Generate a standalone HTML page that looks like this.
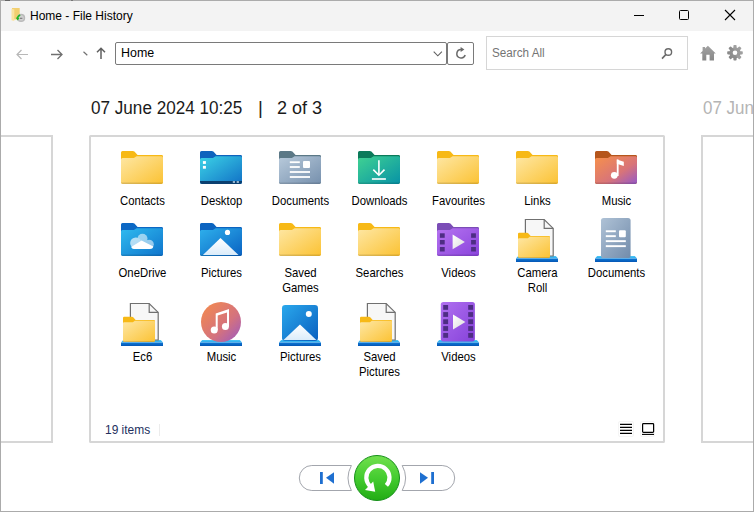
<!DOCTYPE html>
<html><head><meta charset="utf-8">
<style>
*{margin:0;padding:0;box-sizing:border-box}
html,body{width:754px;height:512px;overflow:hidden;background:#fff;font-family:"Liberation Sans",sans-serif;color:#000}
.a{position:absolute}
.t{position:absolute;white-space:nowrap;line-height:1}
.panel{position:absolute;border:2px solid #d6d6d6;background:#fff}
.lbl{position:absolute;width:79px;text-align:center;font-size:12.2px;line-height:15px;color:#000;transform:scaleX(0.93)}
svg{position:absolute;overflow:visible}
</style></head><body>
<!-- title bar -->
<div class="a" style="left:0;top:0;width:754px;height:31px;background:#f3f3f3"></div>
<svg style="left:0;top:0" width="30" height="30">
 <path d="M12 8H19.7V19.5H12Z" fill="#f2cf70"/>
 <path d="M11.5 8.7L14.3 9.6V21L11.5 20.2Z" fill="#fae3a0"/>
 <circle cx="21.1" cy="17.9" r="4.1" fill="#b9b9b9"/>
 <circle cx="21.1" cy="17.9" r="2.6" fill="#d2d2d2"/>
 <path d="M19.8 18.3H22.4" stroke="#777" stroke-width="1.1"/>
 <path d="M20.2 14.9Q17.6 15.8 17.4 18.8" stroke="#21b521" stroke-width="1.6" fill="none"/>
 <path d="M15.8 17.6L17.6 20.4L19.4 18.2Z" fill="#21b521"/>
</svg>
<div class="t" style="left:30px;top:10px;font-size:12px;color:#000">Home - File History</div>
<!-- window controls -->
<div class="a" style="left:634px;top:15px;width:10px;height:1px;background:#000"></div>
<div class="a" style="left:679px;top:10px;width:10px;height:10px;border:1px solid #000;border-radius:1.5px"></div>
<svg style="left:725px;top:10px" width="10" height="10"><path d="M0 0L10 10M10 0L0 10" stroke="#000" stroke-width="1.1"/></svg>

<!-- toolbar -->
<svg style="left:16px;top:49px" width="12" height="11"><path d="M12 5.5H1M5.5 1L1 5.5L5.5 10" stroke="#b8b8b8" stroke-width="1.2" fill="none"/></svg>
<svg style="left:51px;top:49px" width="12" height="11"><path d="M0 5.5H11M6.5 1L11 5.5L6.5 10" stroke="#707070" stroke-width="1.3" fill="none"/></svg>
<svg style="left:83px;top:51px" width="5" height="5"><path d="M0.5 0.8L4.3 4.2" stroke="#707070" stroke-width="1.2"/></svg>
<svg style="left:96px;top:47px" width="10" height="12"><path d="M5 12V1.2M1 5.2L5 1.2L9 5.2" stroke="#606060" stroke-width="1.5" fill="none"/></svg>

<div class="a" style="left:115px;top:42px;width:332px;height:23px;border:1.4px solid #7a7a7a;border-radius:2px"></div>
<div class="t" style="left:121.3px;top:47px;font-size:12px;transform:scaleX(1.035);transform-origin:0 0">Home</div>
<svg style="left:433px;top:51px" width="10" height="6"><path d="M0.7 0.7L4.8 4.8L8.9 0.7" stroke="#606060" stroke-width="1.1" fill="none"/></svg>
<div class="a" style="left:447px;top:42px;width:27px;height:23px;border:1.4px solid #7a7a7a;border-radius:2px"></div>
<svg style="left:455px;top:47px" width="12" height="13"><path d="M6.3 2.4A4.3 4.3 0 1 0 10.2 8.1" stroke="#6a6a6a" stroke-width="1.5" fill="none"/><path d="M5.6 -0.1L9.4 2.4L5.6 4.9Z" fill="#6a6a6a"/></svg>

<div class="a" style="left:486px;top:36px;width:202px;height:34px;border:1px solid #d6d6d6"></div>
<div class="t" style="left:492px;top:47px;font-size:12px;color:#747474;transform:scaleX(0.975);transform-origin:0 0">Search All</div>
<svg style="left:660px;top:47px" width="12" height="13"><circle cx="8.3" cy="5" r="3.3" stroke="#6a6a6a" stroke-width="1.4" fill="none"/><path d="M6 7.4L2 11.6" stroke="#6a6a6a" stroke-width="1.6"/></svg>

<svg style="left:700px;top:45px" width="17" height="16"><defs><linearGradient id="gH" x1="0" y1="0" x2="0" y2="1"><stop offset="0" stop-color="#a2a2a2"/><stop offset="1" stop-color="#888"/></linearGradient></defs><path d="M7.9 0.8L15.8 8.6H14V15.4H9.6V9.8H6.3V15.4H2.3V8.6H0.1L2.6 6.1V2.1H5.1V3.6Z" fill="url(#gH)"/></svg>
<svg style="left:727px;top:45px" width="16" height="16"><g transform="translate(8 7.8)" fill="url(#gH)"><circle r="5.6"/><rect x="-1.6" y="-7.8" width="3.2" height="15.6" rx="0.8" transform="rotate(0)"/><rect x="-1.6" y="-7.8" width="3.2" height="15.6" rx="0.8" transform="rotate(45)"/><rect x="-1.6" y="-7.8" width="3.2" height="15.6" rx="0.8" transform="rotate(90)"/><rect x="-1.6" y="-7.8" width="3.2" height="15.6" rx="0.8" transform="rotate(135)"/></g><circle cx="8" cy="7.8" r="2.3" fill="#fff"/></svg>

<!-- date -->
<div class="t" style="left:91px;top:99px;font-size:18.7px;color:#1a1a1a;transform:scaleX(0.916);transform-origin:0 0">07 June 2024 10:25</div>
<div class="t" style="left:258px;top:99px;font-size:18.7px;color:#1a1a1a">|</div>
<div class="t" style="left:277px;top:99px;font-size:18.7px;color:#1a1a1a;transform:scaleX(0.965);transform-origin:0 0">2 of 3</div>
<div class="t" style="left:703px;top:99px;font-size:18.7px;color:#b4b4b4;transform:scaleX(0.907);transform-origin:0 0">07 June</div>

<!-- panels -->
<div class="panel" style="left:-100px;top:135px;width:153px;height:308px"></div>
<div class="panel" style="border-radius:1.5px;left:89px;top:135px;width:576px;height:308px"></div>
<div class="panel" style="left:701px;top:135px;width:200px;height:308px"></div>

<!-- status -->
<div class="t" style="left:105px;top:424px;font-size:12.2px;color:#23305e;transform:scaleX(0.98);transform-origin:0 0">19 items</div>
<div class="a" style="left:159px;top:424px;width:1px;height:12px;background:#ececec"></div>
<div class="a" style="left:618px;top:421px;width:16px;height:16px;border:1px solid #f5f5f5;border-radius:2px"></div><div class="a" style="left:640px;top:421px;width:15px;height:16px;border:1px solid #f5f5f5;border-radius:2px"></div>
<svg style="left:620px;top:423px" width="13" height="12"><path d="M0 1.4H12M0 4.4H12M0 7.4H12M0 10.4H12" stroke="#000" stroke-width="1.1"/></svg>
<svg style="left:642px;top:423px" width="13" height="13"><rect x="0.6" y="0.6" width="11" height="8.8" rx="0.8" stroke="#000" stroke-width="1.2" fill="none"/><path d="M0 11.4H12" stroke="#000" stroke-width="1.1"/></svg>

<!-- bottom nav -->
<svg style="left:298px;top:454px" width="160" height="48">
 <path d="M13.8 11.5H53.4A26 26 0 0 0 53.4 36.5H13.8A12.5 12.5 0 0 1 13.8 11.5Z" fill="#fff" stroke="#a3a6ad" stroke-width="1"/>
 <path d="M104.2 11.5H144.2A12.5 12.5 0 0 1 144.2 36.5H104.2A26 26 0 0 0 104.2 11.5Z" fill="#fff" stroke="#a3a6ad" stroke-width="1"/>
 <rect x="22" y="18" width="2.8" height="12" fill="#1e6fd0"/>
 <path d="M28 23.8L36 18.2V29.8Z" fill="#1e6fd0"/>
 <path d="M122 18.2L130 23.8L122 29.8Z" fill="#1e6fd0"/>
 <rect x="133.2" y="18" width="2.8" height="12" fill="#1e6fd0"/>
</svg>
<svg style="left:354px;top:455px" width="46" height="46">
 <defs><linearGradient id="gG" x1="0" y1="0" x2="0" y2="1"><stop offset="0" stop-color="#72e04e"/><stop offset="0.5" stop-color="#44cc30"/><stop offset="1" stop-color="#22ac14"/></linearGradient></defs>
 <circle cx="23" cy="23" r="22.5" fill="url(#gG)" stroke="#16901a" stroke-width="1"/>
 <path d="M32.4 30.4A11.6 11.6 0 1 0 16.2 31.2" stroke="#fff" stroke-width="4.2" fill="none"/>
 <path d="M11 35L21.2 36.8L19.2 26.5Z" fill="#fff"/>
</svg>

<svg style="left:0;top:0" width="754" height="512"><defs>
<linearGradient id="gY" x1="0" y1="0" x2="1" y2="1"><stop offset="0" stop-color="#fee7a4"/><stop offset="1" stop-color="#fbc233"/></linearGradient>
<linearGradient id="gD" x1="0" y1="0" x2="1" y2="1"><stop offset="0" stop-color="#3cd3e6"/><stop offset="1" stop-color="#1171c6"/></linearGradient>
<linearGradient id="gDoc" x1="0" y1="0" x2="1" y2="1"><stop offset="0" stop-color="#b8cadb"/><stop offset="1" stop-color="#7690ad"/></linearGradient>
<linearGradient id="gDL" x1="0" y1="0" x2="1" y2="1"><stop offset="0" stop-color="#40d292"/><stop offset="1" stop-color="#0792a6"/></linearGradient>
<linearGradient id="gMu" x1="0" y1="0" x2="1" y2="1"><stop offset="0" stop-color="#f7914a"/><stop offset="0.6" stop-color="#d87479"/><stop offset="1" stop-color="#9458c8"/></linearGradient>
<linearGradient id="gOD" x1="0" y1="0" x2="1" y2="1"><stop offset="0" stop-color="#2fbbef"/><stop offset="1" stop-color="#0f74cc"/></linearGradient>
<linearGradient id="gPic" x1="0" y1="0" x2="1" y2="1"><stop offset="0" stop-color="#2eb0ec"/><stop offset="1" stop-color="#0a62c2"/></linearGradient>
<linearGradient id="gMt" x1="0" y1="0" x2="0" y2="1"><stop offset="0" stop-color="#ffffff"/><stop offset="1" stop-color="#dbecfa"/></linearGradient>
<linearGradient id="gVid" x1="0" y1="0" x2="1" y2="1"><stop offset="0" stop-color="#b573f0"/><stop offset="1" stop-color="#8a44dc"/></linearGradient>
<linearGradient id="gPlay" x1="0" y1="0" x2="1" y2="1"><stop offset="0" stop-color="#ffffff"/><stop offset="1" stop-color="#dcdcdc"/></linearGradient>
<linearGradient id="gBT" x1="0" y1="0" x2="0" y2="1"><stop offset="0" stop-color="#4cc8f6"/><stop offset="1" stop-color="#2aa6ec"/></linearGradient>
<linearGradient id="gBB" x1="0" y1="0" x2="0" y2="1"><stop offset="0" stop-color="#0c78d6"/><stop offset="1" stop-color="#0656b4"/></linearGradient>
<linearGradient id="gDocL" x1="0" y1="0" x2="1" y2="1"><stop offset="0" stop-color="#afc2d6"/><stop offset="1" stop-color="#728cab"/></linearGradient>
<linearGradient id="gMuL" x1="0" y1="0" x2="1" y2="1"><stop offset="0" stop-color="#f68c4a"/><stop offset="0.6" stop-color="#d4727e"/><stop offset="1" stop-color="#9a58c4"/></linearGradient>
<linearGradient id="gPicL" x1="0" y1="0" x2="1" y2="1"><stop offset="0" stop-color="#2aa8ec"/><stop offset="1" stop-color="#0a5fbf"/></linearGradient>
<linearGradient id="gVidL" x1="0" y1="0" x2="1" y2="1"><stop offset="0" stop-color="#b070f0"/><stop offset="1" stop-color="#8642da"/></linearGradient>
</defs>
<g transform="translate(121 151) scale(1.0)"><path d="M0 1.5Q0 0 1.5 0H11.8Q12.7 0 13.4 0.6L16.6 4.1H40.5Q42 4 42 5.5V30.8Q42 33 39.8 33H2.2Q0 33 0 30.8Z" fill="#f7b916"/><path d="M0 8.5Q0 7 1.5 7H12.9L15.6 5.2H40.5Q42 5.2 42 6.7V30.8Q42 33 39.8 33H2.2Q0 33 0 30.8Z" fill="url(#gY)"/><path d="M0 31.6H42V30.8Q42 33 39.8 33H2.2Q0 33 0 30.8Z" fill="#000" opacity="0.13"/></g>
<g transform="translate(200 151) scale(1.0)"><path d="M0 1.5Q0 0 1.5 0H11.8Q12.7 0 13.4 0.6L16.6 4.1H40.5Q42 4 42 5.5V30.8Q42 33 39.8 33H2.2Q0 33 0 30.8Z" fill="#0f63bd"/><path d="M0 8.5Q0 7 1.5 7H12.9L15.6 5.2H40.5Q42 5.2 42 6.7V30.8Q42 33 39.8 33H2.2Q0 33 0 30.8Z" fill="url(#gD)"/><rect x="2.9" y="10.1" width="3" height="2.8" fill="#fff"/><rect x="2.9" y="14.9" width="3" height="2.8" fill="#fff"/><path d="M0 30H42V30.8Q42 33 39.8 33H2.2Q0 33 0 30.8Z" fill="#0b3f6f"/><rect x="32.8" y="30.3" width="2.2" height="1.4" fill="#cfe6f5"/><rect x="36.7" y="30.3" width="2.2" height="1.4" fill="#cfe6f5"/></g>
<g transform="translate(279 151) scale(1.0)"><path d="M0 1.5Q0 0 1.5 0H11.8Q12.7 0 13.4 0.6L16.6 4.1H40.5Q42 4 42 5.5V30.8Q42 33 39.8 33H2.2Q0 33 0 30.8Z" fill="#5b7886"/><path d="M0 8.5Q0 7 1.5 7H12.9L15.6 5.2H40.5Q42 5.2 42 6.7V30.8Q42 33 39.8 33H2.2Q0 33 0 30.8Z" fill="url(#gDoc)"/><path d="M0 31.6H42V30.8Q42 33 39.8 33H2.2Q0 33 0 30.8Z" fill="#000" opacity="0.13"/><g fill="#fff"><rect x="10.8" y="10.3" width="10" height="1.8"/><rect x="10.8" y="15.1" width="10" height="1.8"/><rect x="10.8" y="20.1" width="20.2" height="1.8"/><rect x="10.8" y="25.1" width="20.2" height="1.8"/><rect x="24" y="10" width="7" height="7" rx="1"/></g></g>
<g transform="translate(358 151) scale(1.0)"><path d="M0 1.5Q0 0 1.5 0H11.8Q12.7 0 13.4 0.6L16.6 4.1H40.5Q42 4 42 5.5V30.8Q42 33 39.8 33H2.2Q0 33 0 30.8Z" fill="#0b7a5a"/><path d="M0 8.5Q0 7 1.5 7H12.9L15.6 5.2H40.5Q42 5.2 42 6.7V30.8Q42 33 39.8 33H2.2Q0 33 0 30.8Z" fill="url(#gDL)"/><path d="M0 31.6H42V30.8Q42 33 39.8 33H2.2Q0 33 0 30.8Z" fill="#000" opacity="0.13"/><g stroke="#fff" stroke-width="1.6" fill="none"><path d="M20.9 9.3V24"/><path d="M15.3 18.6L20.9 24.2L26.5 18.6"/><path d="M13.9 28H27.9"/></g></g>
<g transform="translate(437 151) scale(1.0)"><path d="M0 1.5Q0 0 1.5 0H11.8Q12.7 0 13.4 0.6L16.6 4.1H40.5Q42 4 42 5.5V30.8Q42 33 39.8 33H2.2Q0 33 0 30.8Z" fill="#f7b916"/><path d="M0 8.5Q0 7 1.5 7H12.9L15.6 5.2H40.5Q42 5.2 42 6.7V30.8Q42 33 39.8 33H2.2Q0 33 0 30.8Z" fill="url(#gY)"/><path d="M0 31.6H42V30.8Q42 33 39.8 33H2.2Q0 33 0 30.8Z" fill="#000" opacity="0.13"/></g>
<g transform="translate(516 151) scale(1.0)"><path d="M0 1.5Q0 0 1.5 0H11.8Q12.7 0 13.4 0.6L16.6 4.1H40.5Q42 4 42 5.5V30.8Q42 33 39.8 33H2.2Q0 33 0 30.8Z" fill="#f7b916"/><path d="M0 8.5Q0 7 1.5 7H12.9L15.6 5.2H40.5Q42 5.2 42 6.7V30.8Q42 33 39.8 33H2.2Q0 33 0 30.8Z" fill="url(#gY)"/><path d="M0 31.6H42V30.8Q42 33 39.8 33H2.2Q0 33 0 30.8Z" fill="#000" opacity="0.13"/></g>
<g transform="translate(595 151) scale(1.0)"><path d="M0 1.5Q0 0 1.5 0H11.8Q12.7 0 13.4 0.6L16.6 4.1H40.5Q42 4 42 5.5V30.8Q42 33 39.8 33H2.2Q0 33 0 30.8Z" fill="#b5561c"/><path d="M0 8.5Q0 7 1.5 7H12.9L15.6 5.2H40.5Q42 5.2 42 6.7V30.8Q42 33 39.8 33H2.2Q0 33 0 30.8Z" fill="url(#gMu)"/><path d="M0 31.6H42V30.8Q42 33 39.8 33H2.2Q0 33 0 30.8Z" fill="#000" opacity="0.13"/><g fill="#fff"><rect x="21.8" y="8.5" width="1.8" height="16.5"/><path d="M21.8 8.5L28.8 10.8V15L21.8 12.8Z"/><circle cx="19.3" cy="24.3" r="3.4"/></g></g>
<g transform="translate(121 223) scale(1.0)"><path d="M0 1.5Q0 0 1.5 0H11.8Q12.7 0 13.4 0.6L16.6 4.1H40.5Q42 4 42 5.5V30.8Q42 33 39.8 33H2.2Q0 33 0 30.8Z" fill="#0c68c4"/><path d="M0 8.5Q0 7 1.5 7H12.9L15.6 5.2H40.5Q42 5.2 42 6.7V30.8Q42 33 39.8 33H2.2Q0 33 0 30.8Z" fill="url(#gOD)"/><path d="M0 31.6H42V30.8Q42 33 39.8 33H2.2Q0 33 0 30.8Z" fill="#000" opacity="0.13"/><g opacity="0.55" fill="#fff"><circle cx="14.9" cy="20.1" r="5.7"/><circle cx="21.5" cy="15.8" r="5"/><circle cx="28.2" cy="21.3" r="4.6"/><rect x="12" y="19" width="17" height="6.9" rx="2"/></g><circle cx="14.9" cy="20.1" r="5.7" fill="#fff" opacity="0.25"/><path d="M10.2 23.9L20.6 17.6L32.3 23.4Q32 25.9 28.5 25.9H13Q10.6 25.9 10.2 23.9Z" fill="#fff"/></g>
<g transform="translate(200 223) scale(1.0)"><path d="M0 1.5Q0 0 1.5 0H11.8Q12.7 0 13.4 0.6L16.6 4.1H40.5Q42 4 42 5.5V30.8Q42 33 39.8 33H2.2Q0 33 0 30.8Z" fill="#0c64c0"/><path d="M0 8.5Q0 7 1.5 7H12.9L15.6 5.2H40.5Q42 5.2 42 6.7V30.8Q42 33 39.8 33H2.2Q0 33 0 30.8Z" fill="url(#gPic)"/><path d="M0 31.6H42V30.8Q42 33 39.8 33H2.2Q0 33 0 30.8Z" fill="#000" opacity="0.13"/><circle cx="27.5" cy="9.4" r="2.6" fill="#fff"/><path d="M2.9 32L20.5 15L38.5 32Z" fill="url(#gMt)"/></g>
<g transform="translate(279 223) scale(1.0)"><path d="M0 1.5Q0 0 1.5 0H11.8Q12.7 0 13.4 0.6L16.6 4.1H40.5Q42 4 42 5.5V30.8Q42 33 39.8 33H2.2Q0 33 0 30.8Z" fill="#f7b916"/><path d="M0 8.5Q0 7 1.5 7H12.9L15.6 5.2H40.5Q42 5.2 42 6.7V30.8Q42 33 39.8 33H2.2Q0 33 0 30.8Z" fill="url(#gY)"/><path d="M0 31.6H42V30.8Q42 33 39.8 33H2.2Q0 33 0 30.8Z" fill="#000" opacity="0.13"/></g>
<g transform="translate(358 223) scale(1.0)"><path d="M0 1.5Q0 0 1.5 0H11.8Q12.7 0 13.4 0.6L16.6 4.1H40.5Q42 4 42 5.5V30.8Q42 33 39.8 33H2.2Q0 33 0 30.8Z" fill="#f7b916"/><path d="M0 8.5Q0 7 1.5 7H12.9L15.6 5.2H40.5Q42 5.2 42 6.7V30.8Q42 33 39.8 33H2.2Q0 33 0 30.8Z" fill="url(#gY)"/><path d="M0 31.6H42V30.8Q42 33 39.8 33H2.2Q0 33 0 30.8Z" fill="#000" opacity="0.13"/></g>
<g transform="translate(437 223) scale(1.0)"><path d="M0 1.5Q0 0 1.5 0H11.8Q12.7 0 13.4 0.6L16.6 4.1H40.5Q42 4 42 5.5V30.8Q42 33 39.8 33H2.2Q0 33 0 30.8Z" fill="#7b4db6"/><path d="M0 8.5Q0 7 1.5 7H12.9L15.6 5.2H40.5Q42 5.2 42 6.7V30.8Q42 33 39.8 33H2.2Q0 33 0 30.8Z" fill="url(#gVid)"/><path d="M0 31.6H42V30.8Q42 33 39.8 33H2.2Q0 33 0 30.8Z" fill="#000" opacity="0.13"/><rect x="2.9" y="10.3" width="4.8" height="4.5" fill="#4e2d84"/><rect x="2.9" y="17" width="4.8" height="4.5" fill="#4e2d84"/><rect x="2.9" y="24" width="4.8" height="4.5" fill="#4e2d84"/><rect x="34.1" y="10.3" width="4.8" height="4.5" fill="#4e2d84"/><rect x="34.1" y="17" width="4.8" height="4.5" fill="#4e2d84"/><rect x="34.1" y="24" width="4.8" height="4.5" fill="#4e2d84"/><path d="M15.6 11.6L27.9 19L15.6 26.3Z" fill="url(#gPlay)"/></g>
<path d="M2.2 255.8H516" fill="none"/><g transform="translate(516 256)"><path d="M2.2 0H39.8L42 2.6H0Z" fill="url(#gBT)"/><rect x="0" y="2.6" width="42" height="3.4" fill="url(#gBB)"/></g><g transform="translate(516 256)"><path d="M9.4 -36.5H28.2L37.2 -27.6V0H9.4Z" fill="#f7f7f7" stroke="#707070" stroke-width="1.2"/><path d="M28.2 -36.5V-27.6H37.2" fill="none" stroke="#707070" stroke-width="1.2"/></g><g transform="translate(518 232.8) scale(0.7619047619047619)"><path d="M0 1.5Q0 0 1.5 0H11.8Q12.7 0 13.4 0.6L16.6 4.1H40.5Q42 4 42 5.5V30.8Q42 33 39.8 33H2.2Q0 33 0 30.8Z" fill="#f7b916"/><path d="M0 8.5Q0 7 1.5 7H12.9L15.6 5.2H40.5Q42 5.2 42 6.7V30.8Q42 33 39.8 33H2.2Q0 33 0 30.8Z" fill="url(#gY)"/><path d="M0 31.6H42V30.8Q42 33 39.8 33H2.2Q0 33 0 30.8Z" fill="#000" opacity="0.13"/></g>
<path d="M2.2 255.8H595" fill="none"/><g transform="translate(595 256)"><path d="M2.2 0H39.8L42 2.6H0Z" fill="url(#gBT)"/><rect x="0" y="2.6" width="42" height="3.4" fill="url(#gBB)"/></g><g transform="translate(595 256)"><rect x="6" y="-38" width="29.6" height="40" rx="2.6" fill="url(#gDocL)"/><g fill="#fff"><rect x="10.8" y="-25.7" width="10" height="1.9"/><rect x="10.8" y="-20.8" width="10" height="1.9"/><rect x="10.8" y="-15.8" width="20" height="1.9"/><rect x="10.8" y="-10.8" width="20" height="1.9"/><rect x="24" y="-25.8" width="6.8" height="7" rx="1"/></g></g>
<path d="M2.2 339.8H121" fill="none"/><g transform="translate(121 340)"><path d="M2.2 0H39.8L42 2.6H0Z" fill="url(#gBT)"/><rect x="0" y="2.6" width="42" height="3.4" fill="url(#gBB)"/></g><g transform="translate(121 340)"><path d="M9.4 -36.5H28.2L37.2 -27.6V0H9.4Z" fill="#f7f7f7" stroke="#707070" stroke-width="1.2"/><path d="M28.2 -36.5V-27.6H37.2" fill="none" stroke="#707070" stroke-width="1.2"/></g><g transform="translate(123 316.8) scale(0.7619047619047619)"><path d="M0 1.5Q0 0 1.5 0H11.8Q12.7 0 13.4 0.6L16.6 4.1H40.5Q42 4 42 5.5V30.8Q42 33 39.8 33H2.2Q0 33 0 30.8Z" fill="#f7b916"/><path d="M0 8.5Q0 7 1.5 7H12.9L15.6 5.2H40.5Q42 5.2 42 6.7V30.8Q42 33 39.8 33H2.2Q0 33 0 30.8Z" fill="url(#gY)"/><path d="M0 31.6H42V30.8Q42 33 39.8 33H2.2Q0 33 0 30.8Z" fill="#000" opacity="0.13"/></g>
<path d="M2.2 339.8H200" fill="none"/><g transform="translate(200 340)"><path d="M2.2 0H39.8L42 2.6H0Z" fill="url(#gBT)"/><rect x="0" y="2.6" width="42" height="3.4" fill="url(#gBB)"/></g><g transform="translate(200 340)"><circle cx="21" cy="-18" r="20" fill="url(#gMuL)"/><g fill="#fff"><path d="M15.7 -26.6L29 -31V-13.4H27V-27.6L17.7 -24.5V-9.7H15.7Z"/><circle cx="14.2" cy="-9.9" r="3.5"/><circle cx="25.4" cy="-13.5" r="3.5"/></g></g>
<path d="M2.2 339.8H279" fill="none"/><g transform="translate(279 340)"><path d="M2.2 0H39.8L42 2.6H0Z" fill="url(#gBT)"/><rect x="0" y="2.6" width="42" height="3.4" fill="url(#gBB)"/></g><g transform="translate(279 340)"><rect x="3" y="-35" width="36" height="36" rx="3.2" fill="url(#gPicL)"/><circle cx="29.8" cy="-26" r="3" fill="#fff"/><path d="M4.5 0L21 -15.6L37.3 0Z" fill="url(#gMt)"/></g>
<path d="M2.2 339.8H358" fill="none"/><g transform="translate(358 340)"><path d="M2.2 0H39.8L42 2.6H0Z" fill="url(#gBT)"/><rect x="0" y="2.6" width="42" height="3.4" fill="url(#gBB)"/></g><g transform="translate(358 340)"><path d="M9.4 -36.5H28.2L37.2 -27.6V0H9.4Z" fill="#f7f7f7" stroke="#707070" stroke-width="1.2"/><path d="M28.2 -36.5V-27.6H37.2" fill="none" stroke="#707070" stroke-width="1.2"/></g><g transform="translate(360 316.8) scale(0.7619047619047619)"><path d="M0 1.5Q0 0 1.5 0H11.8Q12.7 0 13.4 0.6L16.6 4.1H40.5Q42 4 42 5.5V30.8Q42 33 39.8 33H2.2Q0 33 0 30.8Z" fill="#f7b916"/><path d="M0 8.5Q0 7 1.5 7H12.9L15.6 5.2H40.5Q42 5.2 42 6.7V30.8Q42 33 39.8 33H2.2Q0 33 0 30.8Z" fill="url(#gY)"/><path d="M0 31.6H42V30.8Q42 33 39.8 33H2.2Q0 33 0 30.8Z" fill="#000" opacity="0.13"/></g>
<path d="M2.2 339.8H437" fill="none"/><g transform="translate(437 340)"><path d="M2.2 0H39.8L42 2.6H0Z" fill="url(#gBT)"/><rect x="0" y="2.6" width="42" height="3.4" fill="url(#gBB)"/></g><g transform="translate(437 340)"><rect x="3.8" y="-38.1" width="34.1" height="39.5" rx="2.6" fill="url(#gVidL)"/><rect x="6.2" y="-35" width="4.9" height="4.8" fill="#4e2d84"/><rect x="6.2" y="-27.9" width="4.9" height="4.8" fill="#4e2d84"/><rect x="6.2" y="-20.7" width="4.9" height="4.8" fill="#4e2d84"/><rect x="6.2" y="-13.9" width="4.9" height="4.8" fill="#4e2d84"/><rect x="6.2" y="-7" width="4.9" height="4.8" fill="#4e2d84"/><rect x="31.2" y="-35" width="4.9" height="4.8" fill="#4e2d84"/><rect x="31.2" y="-27.9" width="4.9" height="4.8" fill="#4e2d84"/><rect x="31.2" y="-20.7" width="4.9" height="4.8" fill="#4e2d84"/><rect x="31.2" y="-13.9" width="4.9" height="4.8" fill="#4e2d84"/><rect x="31.2" y="-7" width="4.9" height="4.8" fill="#4e2d84"/><path d="M16 -25.5L28.4 -18L16 -10.4Z" fill="url(#gPlay)"/></g>
</svg>
<div class="lbl" style="left:103.0px;top:194px">Contacts</div>
<div class="lbl" style="left:182.0px;top:194px">Desktop</div>
<div class="lbl" style="left:261.0px;top:194px">Documents</div>
<div class="lbl" style="left:340.0px;top:194px">Downloads</div>
<div class="lbl" style="left:419.0px;top:194px">Favourites</div>
<div class="lbl" style="left:498.0px;top:194px">Links</div>
<div class="lbl" style="left:577.0px;top:194px">Music</div>
<div class="lbl" style="left:103.0px;top:266px">OneDrive</div>
<div class="lbl" style="left:182.0px;top:266px">Pictures</div>
<div class="lbl" style="left:261.0px;top:266px">Saved<br>Games</div>
<div class="lbl" style="left:340.0px;top:266px">Searches</div>
<div class="lbl" style="left:419.0px;top:266px">Videos</div>
<div class="lbl" style="left:498.0px;top:266px">Camera<br>Roll</div>
<div class="lbl" style="left:577.0px;top:266px">Documents</div>
<div class="lbl" style="left:103.0px;top:350px">Ec6</div>
<div class="lbl" style="left:182.0px;top:350px">Music</div>
<div class="lbl" style="left:261.0px;top:350px">Pictures</div>
<div class="lbl" style="left:340.0px;top:350px">Saved<br>Pictures</div>
<div class="lbl" style="left:419.0px;top:350px">Videos</div>
<div class="a" style="left:0;top:0;width:754px;height:512px;border:1px solid #ababab"></div>
<div class="a" style="left:5px;top:0;width:5px;height:1px;background:#666"></div>
<div class="a" style="left:71px;top:0;width:2px;height:1px;background:#777"></div>
</body></html>
